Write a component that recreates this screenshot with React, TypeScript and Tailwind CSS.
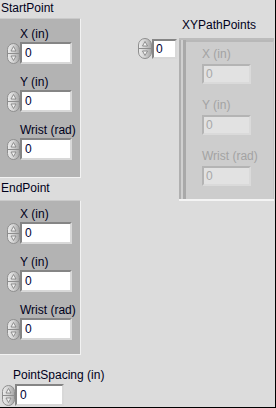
import React from "react";

const Spinner = ({ w = 13, h = 21 }: { w?: number; h?: number }) => (
  <svg width={w} height={h} viewBox={`0 0 ${w} ${h}`} className="block">
    <defs>
      <linearGradient id="spg" x1="0" x2="1" y1="0" y2="0">
        <stop offset="0" stopColor="#ececec" />
        <stop offset="0.5" stopColor="#d2d2d2" />
        <stop offset="1" stopColor="#a4a4a4" />
      </linearGradient>
    </defs>
    <rect x="0.5" y="0.5" width={w - 1} height={h - 1} rx={(w - 1) / 2} fill="url(#spg)" stroke="#8e8e8e" />
    <line x1="1" y1={h / 2} x2={w - 1} y2={h / 2} stroke="#8e8e8e" strokeWidth="1" />
    <path d={`M${w / 2} 3.5 L${w / 2 + 2.5} 8 H${w / 2 - 2.5} Z`} fill="#f2f2f2" stroke="#7c7c7c" strokeWidth="0.8" />
    <path d={`M${w / 2} ${h - 3.5} L${w / 2 + 2.5} ${h - 8} H${w / 2 - 2.5} Z`} fill="#f2f2f2" stroke="#7c7c7c" strokeWidth="0.8" />
  </svg>
);

const NumInput = ({ w }: { w: string }) => (
  <div
    className={`${w} h-[22px] bg-white border-2 border-t-[#858585] border-l-[#858585] border-b-[#d8d8d8] border-r-[#d8d8d8] pl-[3px] leading-[18px] text-[12px] text-[#000033]`}
  >
    0
  </div>
);

const Control = ({ label }: { label: string }) => (
  <div className="flex flex-col">
    <div className="h-[14px] leading-[14px] pl-[20px] whitespace-nowrap text-[#00001a]">{label}</div>
    <div className="mt-[1px] flex items-center h-[22px]">
      <div className="ml-[7px] w-[13px]">
        <Spinner />
      </div>
      <NumInput w="w-[52px]" />
    </div>
  </div>
);

const DisabledControl = ({ label }: { label: string }) => (
  <div className="flex flex-col">
    <div className="h-[14px] leading-[14px] pl-[16px] whitespace-nowrap text-[#a3a3a3]">{label}</div>
    <div className="mt-[3px] ml-[16px] w-[49px] h-[20px] bg-[#e2e2e2] border-2 border-t-[#b4b4b4] border-l-[#b4b4b4] border-b-[#dadada] border-r-[#dadada] pl-[2px] leading-[16px] text-[#a8a8a8]">
      0
    </div>
  </div>
);

export default function App() {
  return (
    <div className="w-[276px] h-[408px] bg-[#dcdcdc] border-r border-b border-black flex overflow-hidden font-['Liberation_Sans',Arial,sans-serif] text-[12px] text-black">
      {/* Left column */}
      <div className="w-[82px] flex flex-col shrink-0">
        <div className="h-[18px] pt-[1px] pl-[1px] leading-[14px] text-[#00001a]">StartPoint</div>
        <div className="w-[81px] h-[160px] bg-[#b3b3b3] border-t border-t-[#cacaca] border-r border-r-[#f2f2f2] border-b border-b-[#f2f2f2] pt-[8px] flex flex-col gap-[11px]">
          <Control label="X (in)" />
          <Control label="Y (in)" />
          <Control label="Wrist (rad)" />
        </div>
        <div className="h-[22px] pt-[3px] pl-[1px] leading-[14px] text-[#00001a]">EndPoint</div>
        <div className="w-[81px] h-[155px] bg-[#b3b3b3] border-t border-t-[#cacaca] border-r border-r-[#f2f2f2] border-b border-b-[#f2f2f2] pt-[6px] flex flex-col gap-[11px]">
          <Control label="X (in)" />
          <Control label="Y (in)" />
          <Control label="Wrist (rad)" />
        </div>
        <div className="mt-[13px] pl-[13px] h-[14px] leading-[14px] whitespace-nowrap text-[#00001a]">PointSpacing (in)</div>
        <div className="mt-[2px] flex items-center h-[22px]">
          <div className="ml-[2px] w-[13px]">
            <Spinner />
          </div>
          <NumInput w="w-[49px]" />
        </div>
      </div>

      {/* Right column */}
      <div className="flex-1 flex flex-col">
        <div className="h-[19px] pt-[19px] box-content pl-[100px] leading-[14px] whitespace-nowrap text-[#00001a] -mt-[1px]">
          XYPathPoints
        </div>
        <div className="flex items-start mt-[1px]">
          <div className="ml-[56px] flex items-center h-[21px]">
            <div className="w-[14px]">
              <Spinner w={14} h={21} />
            </div>
            <div className="w-[25px] h-[20px] bg-white border-2 border-t-[#858585] border-l-[#858585] border-b-[#d8d8d8] border-r-[#d8d8d8] pl-[2px] leading-[16px] text-[#000033]">
              0
            </div>
          </div>
          {/* Array frame */}
          <div className="ml-[2px] w-[95px] h-[163px] flex flex-col">
            <div className="flex-1 flex bg-[#c6c6c6] border-t-2 border-t-[#bcbcbc]">
              <div className="w-[2px] bg-[#b0b0b0]" />
              <div className="w-[2px] bg-[#d0d0d0]" />
              <div className="w-[3px] bg-[#a9a9a9]" />
              <div className="flex-1 bg-[#cdcdcd] border-t-2 border-t-[#b8b8b8] border-r border-r-[#c4c4c4] pt-[5px] flex flex-col gap-[14px]">
                <DisabledControl label="X (in)" />
                <DisabledControl label="Y (in)" />
                <DisabledControl label="Wrist (rad)" />
              </div>
            </div>
            <div className="h-[2px] bg-[#f4f4f4]" />
          </div>
        </div>
      </div>
    </div>
  );
}
